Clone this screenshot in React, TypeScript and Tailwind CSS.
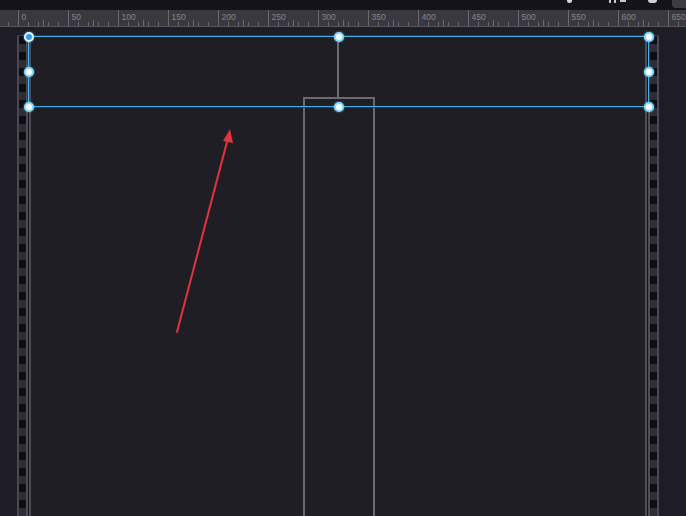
import React from 'react';

const ORIGIN = 18;

const Ruler = () => {
	const ticks: React.ReactNode[] = [];
	for (let v = -10; v <= 670; v += 10) {
		const x = ORIGIN + v + 0.5;
		if (v % 50 === 0) {
			ticks.push(<line key={v} x1={x} y1={0} x2={x} y2={16} stroke="#6a6972" strokeWidth={1} />);
			if (v >= 0)
				ticks.push(
					<text key={`t${v}`} x={x + 3} y={10} fontSize={8.5} fill="#85848c" fontFamily="'Liberation Sans', sans-serif">
						{v}
					</text>,
				);
		} else {
			ticks.push(<line key={v} x1={x} y1={12} x2={x} y2={16} stroke="#6a6972" strokeWidth={1} />);
		}
	}
	for (let v = 25; v <= 670; v += 50) {
		const x = ORIGIN + v + 0.5;
		ticks.push(<line key={`m${v}`} x1={x} y1={10} x2={x} y2={16} stroke="#6a6972" strokeWidth={1} />);
	}
	return (
		<div className="shrink-0 h-[17px] bg-[#39383f] border-b border-[#57565e]">
			<svg width={686} height={16} className="block">
				{ticks}
			</svg>
		</div>
	);
};

const Film = () => (
	<div className="w-[7px] bg-[repeating-linear-gradient(to_bottom,#0d0d12_0px,#0d0d12_8px,#2e2d35_8px,#2e2d35_16px)]" />
);

const Handle = ({ active }: { active?: boolean }) => (
	<div
		className={
			active
				? 'w-[10px] h-[10px] rounded-full border-2 bg-[#3b9ce6] border-[#dff4ff] shadow-[0_0_2px_#4fc0f0]'
				: 'w-[10px] h-[10px] rounded-full border-2 bg-white border-[#8ad8f8] shadow-[0_0_2px_#4fc0f0]'
		}
	/>
);

const Strip = ({ side }: { side: 'left' | 'right' }) => {
	const inner = [
		<div key="a" className="w-[2px] bg-[#4e4d55]" />,
		<div key="b" className="w-[1px] bg-[#17161c]" />,
		<div key="c" className="w-[2px] bg-[#4e4d55]" />,
	];
	return (
		<div className="flex">
			{side === 'left' ? (
				<>
					<div className="w-[2px] bg-[#4a4951]" />
					<Film />
					{inner}
				</>
			) : (
				<>
					{inner}
					<Film />
					<div className="w-[2px] bg-[#4a4951]" />
				</>
			)}
		</div>
	);
};

export default function App() {
	return (
		<div className="relative w-[686px] h-[516px] flex flex-col overflow-hidden bg-[#1e1d25] font-['Liberation_Sans',sans-serif]">
			{/* window top bar, icons cut off */}
			<div className="shrink-0 h-[10px] bg-[#141319] flex items-start justify-end">
				<div className="w-[5px] h-[3px] rounded-b bg-[#d8d8dc] mr-[37px]" />
				<div className="w-[2px] h-[3px] bg-[#c8c8cc] mr-[3px]" />
				<div className="w-[2px] h-[3px] bg-[#c8c8cc] mr-[4px]" />
				<div className="w-[6px] h-[2px] bg-[#c8c8cc] mr-[22px]" />
				<div className="w-[9px] h-[3px] rounded-b-sm bg-[#d0d0d4] mr-[15px]" />
				<div className="w-[14px] h-[8px] rounded-bl bg-[#3d3c43]" />
			</div>
			<Ruler />
			<div className="relative flex-1 pl-[17px] pt-[8px]">
				{/* artboard */}
				<div className="relative flex w-[642px] h-[500px] border-t border-[#3a3941]">
					<Strip side="left" />
					<div className="flex-1 bg-[#1f1e25]" />
					<Strip side="right" />
					<div className="absolute left-[286px] top-[61px] w-[72px] h-[460px] border-2 border-[#6b6a72]" />
					<div className="absolute left-[320px] top-0 w-[2px] h-[62px] bg-[#6b6a72]" />
				</div>
				{/* selection box */}
				<div className="absolute left-[28px] top-[9px] w-[621px] h-[71px] border border-[#45b0e8] shadow-[0_0_0_1px_rgba(20,70,100,0.8)]">
					<div className="absolute -inset-[5.5px] flex flex-col justify-between">
						<div className="flex justify-between">
							<Handle active />
							<Handle />
							<Handle />
						</div>
						<div className="flex justify-between">
							<Handle />
							<Handle />
						</div>
						<div className="flex justify-between">
							<Handle />
							<Handle />
							<Handle />
						</div>
					</div>
				</div>
			</div>
			<svg className="absolute left-0 top-0 pointer-events-none" width={686} height={516}>
				<line x1={177} y1={332} x2={227.5} y2={140} stroke="#e5333b" strokeWidth={2} strokeLinecap="round" />
				<polygon points="230,129 233,143 223,141" fill="#e5333b" />
			</svg>
		</div>
	);
}
